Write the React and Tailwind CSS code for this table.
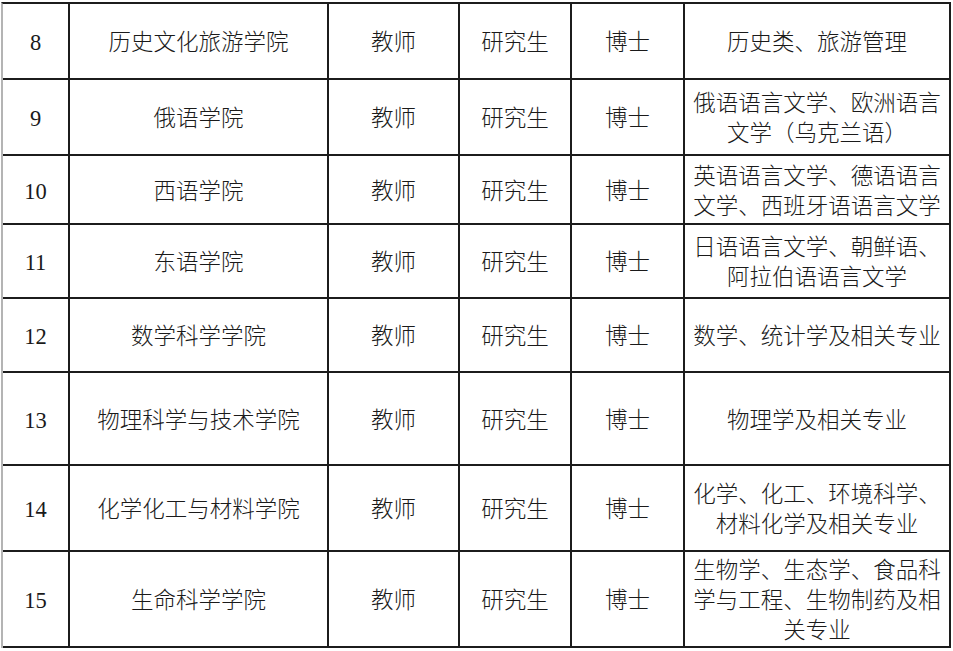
import React from "react";

const rows = [
  { h: "h-[76px]", n: "8", dept: "历史文化旅游学院", spec: ["历史类、旅游管理"] },
  { h: "h-[76px]", n: "9", dept: "俄语学院", spec: ["俄语语言文学、欧洲语言", "文学（乌克兰语）"] },
  { h: "h-[69px]", n: "10", dept: "西语学院", spec: ["英语语言文学、德语语言", "文学、西班牙语语言文学"] },
  { h: "h-[74px]", n: "11", dept: "东语学院", spec: ["日语语言文学、朝鲜语、", "阿拉伯语语言文学"] },
  { h: "h-[74px]", n: "12", dept: "数学科学学院", spec: ["数学、统计学及相关专业"] },
  { h: "h-[93px]", n: "13", dept: "物理科学与技术学院", spec: ["物理学及相关专业"] },
  { h: "h-[86px]", n: "14", dept: "化学化工与材料学院", spec: ["化学、化工、环境科学、", "材料化学及相关专业"] },
  { h: "h-[96px]", n: "15", dept: "生命科学学院", spec: ["生物学、生态学、食品科", "学与工程、生物制药及相", "关专业"] },
];

const cell =
  "flex items-center justify-center text-center pt-[4px] border-r-2 border-b-2 border-[#1c1c1c] whitespace-nowrap";

export default function App() {
  return (
    <div
      className="w-[953px] h-[651px] bg-white overflow-hidden pt-[2px] text-[#1a1a1a] font-light"
      style={{ fontFamily: '"Liberation Serif", "Noto Sans CJK SC", serif' }}
    >
      <div className="ml-[1px] w-[950px] border-l-2 border-l-[#b4b4b4] border-t-2 border-t-[#1c1c1c]">
        {rows.map((r) => (
          <div
            key={r.n}
            className={`grid grid-cols-[67px_259px_131px_112px_113px_266px] ${r.h} text-[22.5px] leading-[30px]`}
          >
            <div className={`${cell} font-normal`}>{r.n}</div>
            <div className={cell}>{r.dept}</div>
            <div className={cell}>教师</div>
            <div className={cell}>研究生</div>
            <div className={cell}>博士</div>
            <div className={`${cell} flex-col`}>
              {r.spec.map((s, i) => (
                <div key={i}>{s}</div>
              ))}
            </div>
          </div>
        ))}
      </div>
    </div>
  );
}
